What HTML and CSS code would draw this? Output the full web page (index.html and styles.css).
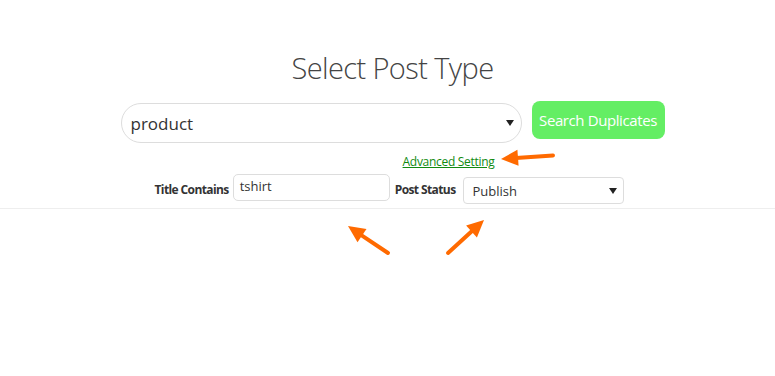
FILE: index.html
```html
<!DOCTYPE html>
<html>
<head>
  <title>Select Post Type</title>
  <link rel="stylesheet" href="styles.css">
</head>
<body>

<div id="contenido">
  <h2 class="titulo">Select Post Type</h2>

  <div class="filaTipo">
    <div class="selector grande">
      <span>product</span>
      <span class="flecha"></span>
    </div>
    <button class="boton">Search Duplicates</button>
  </div>

  <div class="filaAvanzado">
    <a href="#">Advanced Setting</a>
  </div>

  <div class="filaFiltros">
    <label>Title Contains</label>
    <div class="campo">tshirt</div>
    <label class="estado">Post Status</label>
    <div class="selector chico">
      <span>Publish</span>
      <span class="flecha"></span>
    </div>
  </div>
</div>

<div class="separador"></div>

<!-- flechas de anotacion -->
<svg class="anotaciones" width="775" height="376">
  <g stroke="#ff6a00" stroke-width="4" stroke-linecap="round" fill="#ff6a00">
    <line x1="553" y1="155.5" x2="516" y2="158"/>
    <polygon points="501,159 517.4,149.7 518.6,165.7" stroke="none"/>
    <line x1="388" y1="253" x2="362" y2="235.6"/>
    <polygon points="348,226 366.5,229 357.5,242.2" stroke="none"/>
    <line x1="448" y1="253" x2="471.5" y2="231.5"/>
    <polygon points="484,220 476.9,237.4 466.1,225.6" stroke="none"/>
  </g>
</svg>

</body>
</html>
```

FILE: styles.css
```css
body, html {
  margin: 0;
  background-color: white;
  font-family: "Open Sans", "Noto Sans", sans-serif;
  color: #333;
}

#contenido {
  padding-left: 10px;
  padding-top: 47px;
  text-align: center;
}

.titulo {
  margin: 0;
  font-size: 29px;
  font-weight: 300;
  color: #444;
  line-height: 42px;
  letter-spacing: -0.6px;
}

.filaTipo {
  display: flex;
  justify-content: center;
  align-items: flex-start;
  gap: 10px;
  margin-top: 12px;
}

.selector {
  display: flex;
  align-items: center;
  justify-content: space-between;
  box-sizing: border-box;
  background-color: white;
  border: 1px solid #ddd;
  text-align: left;
}

.selector.grande {
  width: 401px;
  height: 40px;
  margin-top: 2px;
  padding: 0 7px 0 9px;
  border-radius: 20px;
  font-size: 17px;
  color: #333;
}

.selector.chico {
  width: 161px;
  height: 27px;
  margin-top: 3px;
  padding: 0 6px 0 9px;
  border-radius: 4px;
  font-size: 13px;
  color: #333;
}

.flecha {
  width: 0;
  height: 0;
  border-left: 4px solid transparent;
  border-right: 4px solid transparent;
  border-top: 6px solid #222;
}

.boton {
  height: 38px;
  width: 133px;
  padding: 0;
  background-color: #64ee64;
  border: none;
  border-radius: 8px;
  color: white;
  font-family: "Open Sans", "Noto Sans", sans-serif;
  font-size: 15px;
  letter-spacing: -0.4px;
}

.filaAvanzado {
  margin-top: 11px;
  padding-left: 112px;
  font-size: 12px;
  line-height: 16px;
}

.filaAvanzado a {
  color: #118a11;
  text-decoration: underline;
  letter-spacing: -0.3px;
}

.filaFiltros {
  display: flex;
  justify-content: center;
  align-items: flex-start;
  margin-top: 4px;
  padding-right: 7px;
  font-size: 12px;
}

.filaFiltros label {
  font-weight: bold;
  color: #333;
  line-height: 16px;
  margin-top: 8px;
  margin-right: 4px;
  letter-spacing: -0.6px;
}

.filaFiltros label.estado {
  margin-right: 7px;
}

.campo {
  box-sizing: border-box;
  width: 157px;
  height: 27px;
  margin-right: 5px;
  padding: 2px 6px;
  border: 1px solid #ddd;
  border-radius: 5px;
  text-align: left;
  font-size: 13px;
}

.separador {
  margin-top: 4px;
  border-top: 1px solid #eee;
}

.anotaciones {
  position: absolute;
  top: 0;
  left: 0;
  pointer-events: none;
}
```
